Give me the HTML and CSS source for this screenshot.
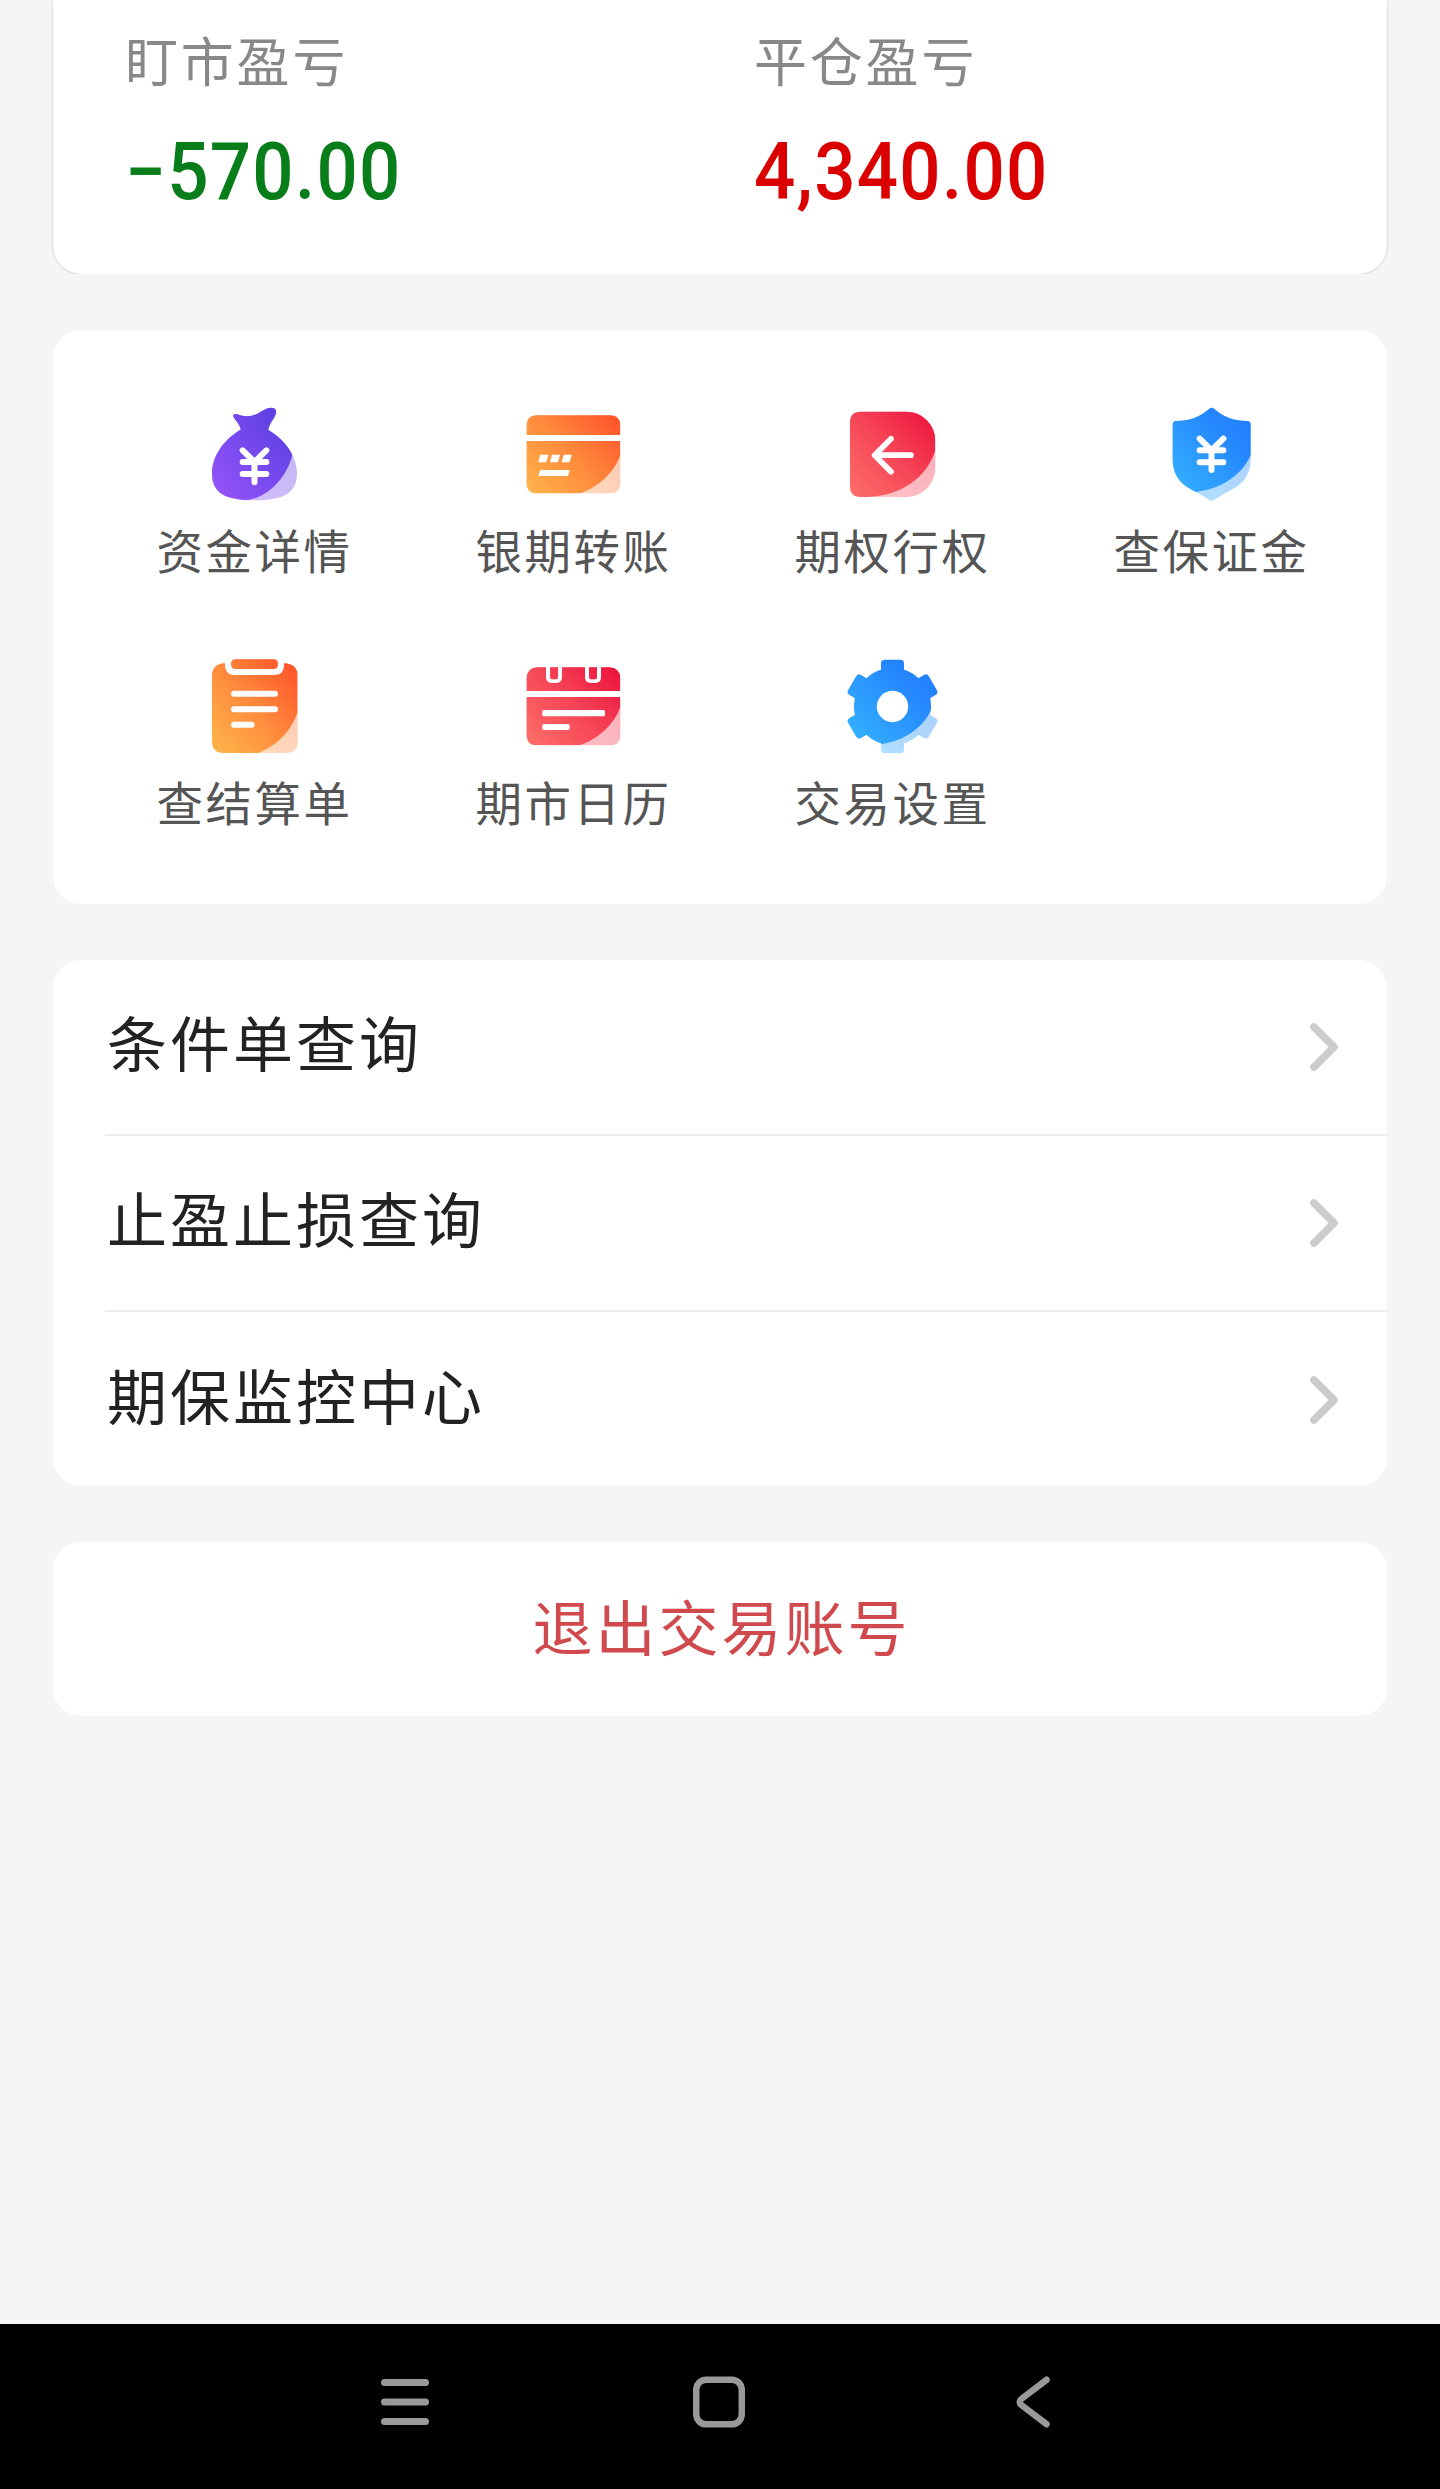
FILE: index.html
```html
<!DOCTYPE html>
<html lang="zh-CN">
<head>
<meta charset="utf-8">
<title>交易账户</title>
<link rel="stylesheet" href="styles.css">
</head>
<body>
<svg class="defs" width="0" height="0" aria-hidden="true">
  <defs>
    <linearGradient id="purple" x1="0" y1="1" x2="1" y2="0"><stop offset="0.1" stop-color="#9153f8"/><stop offset="0.85" stop-color="#5d40e2"/></linearGradient>
    <linearGradient id="orange" gradientUnits="userSpaceOnUse" x1="205" y1="320" x2="475" y2="75"><stop offset="0" stop-color="#ffb64c"/><stop offset="0.5" stop-color="#ff8a3c"/><stop offset="1" stop-color="#ff5129"/></linearGradient>
    <linearGradient id="red" gradientUnits="userSpaceOnUse" x1="205" y1="320" x2="465" y2="70"><stop offset="0" stop-color="#fd7069"/><stop offset="0.5" stop-color="#f64657"/><stop offset="1" stop-color="#ed123c"/></linearGradient>
    <linearGradient id="blue" gradientUnits="userSpaceOnUse" x1="205" y1="320" x2="460" y2="70"><stop offset="0" stop-color="#36b6ff"/><stop offset="0.75" stop-color="#2485fe"/><stop offset="1" stop-color="#2080ff"/></linearGradient>
    <clipPath id="fold-bag"><path d="M150 0H457V195C440 265 380 327 310 332H150Z"/></clipPath>
    <clipPath id="fold-card"><path d="M150 0H481V195C464 245 416 292 358 311H150Z"/></clipPath>
    <clipPath id="fold-tile"><path d="M150 0H466V180C440 265 360 318 262 321H150Z"/></clipPath>
    <clipPath id="fold-shield"><path d="M150 0H453V193C430 250 370 295 290 306H150Z"/></clipPath>
    <clipPath id="fold-sheet"><path d="M150 0H473V215C455 270 412 319 350 340H150Z"/></clipPath>
    <clipPath id="fold-calendar"><path d="M150 0H481V200C464 250 416 297 358 316H150Z"/></clipPath>
    <clipPath id="fold-gear"><path d="M150 0H490V175L455 205C435 260 370 306 302 312H150Z"/></clipPath>
    <path id="bag" d="M279 77Q282 69 292 73Q324 85 352 71C368 61 378 54 393 53Q411 53 408 70C404 87 388 99 385 120C428 144 471 194 471 249C471 309 432 331 343 331C255 331 216 309 216 249C216 194 258 143 302 119C299 100 285 92 279 77Z"/>
    <path id="card" d="M231 76H449Q481 76 481 108V135H200V108Q200 76 231 76ZM200 153H481V278Q481 310 449 310H231Q200 310 200 278Z"/>
    <path id="tile" d="M242 65H379A87 87 0 0 1 466 152V234A87 87 0 0 1 379 321H242Q210 321 210 289V97Q210 65 242 65Z"/>
    <path id="shield" d="M328 56Q335 50 342 56C373 83 404 92 442 93Q452 94 452 103V206C452 258 427 281 395 299Q365 314 342 330Q335 335 328 330Q305 314 275 299C243 281 218 258 218 206V103Q218 94 228 93C266 92 297 83 328 56Z"/>
    <path id="sheet" d="M255 70V79Q257 105 283 105H404Q430 105 432 79V70Q473 72 473 108V304Q473 339 438 339H251Q216 339 216 304V108Q216 72 255 70ZM287 58H400Q414 58 414 72Q414 87 400 87H287Q273 87 273 72Q273 58 287 58Z"/>
    <path id="calendar" d="M231 82H258V112Q258 129 275 129H289Q306 129 306 112V82H375V112Q375 129 392 129H406Q423 129 423 112V82H449Q481 84 481 116V153H200V116Q200 84 231 82ZM270 82H294V110Q294 118 286 118H278Q270 118 270 110ZM387 82H411V110Q411 118 403 118H395Q387 118 387 110ZM200 171H481V284Q481 316 449 316H231Q200 316 200 284Z"/>
    <g id="gear-body">
      <circle cx="337.500" cy="199.500" r="116"/>
      <g id="tooth-pair"><rect x="303" y="59.500" width="69" height="70" rx="11"/><rect x="303" y="269.500" width="69" height="70" rx="11"/></g>
      <use href="#tooth-pair" transform="rotate(60 337.5 199.5)"/>
      <use href="#tooth-pair" transform="rotate(120 337.5 199.5)"/>
    </g>
    <mask id="gear-mask" maskUnits="userSpaceOnUse" x="180" y="40" width="320" height="320"><use href="#gear-body" fill="#fff"/></mask>
  </defs>
</svg>

<main class="page">
  <section class="card summary">
    <div class="stat"><span class="stat-label">盯市盈亏</span><span class="stat-value loss">−570.00</span></div>
    <div class="stat"><span class="stat-label">平仓盈亏</span><span class="stat-value gain">4,340.00</span></div>
  </section>

  <section class="card tools">
    <a class="tool">
      <svg class="tool-icon" viewBox="201 48 288 288"><use href="#bag" fill="url(#purple)" opacity="0.38"/><g clip-path="url(#fold-bag)"><use href="#bag" fill="url(#purple)"/></g><path class="mark yen" d="M308 181L343.500 216L379 181M308 216H379M308 252H379M343.500 216V277"/></svg>
      <span>资金详情</span>
    </a>
    <a class="tool">
      <svg class="tool-icon" viewBox="198 48 288 288"><use href="#card" fill="url(#orange)" opacity="0.36"/><g clip-path="url(#fold-card)"><use href="#card" fill="url(#orange)"/></g><path class="solid" d="M241 194H265L259 217H235ZM276 194H300L294 217H270ZM311 194H335L329 217H305ZM241 240H329L324 258H235Z"/></svg>
      <span>银期转账</span>
    </a>
    <a class="tool">
      <svg class="tool-icon" viewBox="195 48 288 288"><use href="#tile" fill="url(#red)" opacity="0.38"/><g clip-path="url(#fold-tile)"><use href="#tile" fill="url(#red)"/></g><path class="mark arrow" d="M333 146L284 195.500L333 245M288 195.500H393"/></svg>
      <span>期权行权</span>
    </a>
    <a class="tool">
      <svg class="tool-icon" viewBox="192 48 288 288"><use href="#shield" fill="url(#blue)" opacity="0.38"/><g clip-path="url(#fold-shield)"><use href="#shield" fill="url(#blue)"/></g><path class="mark yen" d="M299 146L334.500 181L370 146M299 181H370M299 217H370M334.500 181V240"/></svg>
      <span>查保证金</span>
    </a>
    <a class="tool">
      <svg class="tool-icon" viewBox="201 54 288 288"><use href="#sheet" fill="url(#orange)" opacity="0.36"/><g clip-path="url(#fold-sheet)"><use href="#sheet" fill="url(#orange)"/></g><path class="mark lines" d="M282 161.500H405M282 208H405M282 254.500H335"/></svg>
      <span>查结算单</span>
    </a>
    <a class="tool">
      <svg class="tool-icon" viewBox="198 54 288 288"><use href="#calendar" fill="url(#red)" opacity="0.38"/><g clip-path="url(#fold-calendar)"><use href="#calendar" fill="url(#red)"/></g><g class="solid"><rect x="247" y="210" width="188" height="19" rx="5"/><rect x="247" y="252" width="82" height="18" rx="5"/></g></svg>
      <span>期市日历</span>
    </a>
    <a class="tool">
      <svg class="tool-icon" viewBox="195 54 288 288"><g mask="url(#gear-mask)"><rect x="190" y="50" width="300" height="300" fill="url(#blue)" opacity="0.38"/><g clip-path="url(#fold-gear)"><rect x="190" y="50" width="300" height="300" fill="url(#blue)"/></g></g><circle class="solid" cx="337.500" cy="199.500" r="47"/></svg>
      <span>交易设置</span>
    </a>
  </section>

  <nav class="card list">
    <a class="row"><span>条件单查询</span><svg class="chevron" viewBox="0 0 28 48"><path d="M4 4L24 24L4 44"/></svg></a>
    <a class="row"><span>止盈止损查询</span><svg class="chevron" viewBox="0 0 28 48"><path d="M4 4L24 24L4 44"/></svg></a>
    <a class="row"><span>期保监控中心</span><svg class="chevron" viewBox="0 0 28 48"><path d="M4 4L24 24L4 44"/></svg></a>
  </nav>

  <a class="card logout">退出交易账号</a>
</main>

<footer class="system-bar">
  <svg class="system-icon" viewBox="0 0 52 52"><path class="thick" d="M6.500 6.500H47.500M6.500 26H47.500M6.500 45.500H47.500"/></svg>
  <svg class="system-icon" viewBox="0 0 52 52"><rect x="3.200" y="3.700" width="45.600" height="44.600" rx="10"/></svg>
  <svg class="system-icon" viewBox="0 0 52 52"><path d="M38.500 3.800L14 22.500Q9.500 26 14 29.500L38.500 48.200"/></svg>
</footer>
</body>
</html>
```
FILE: styles.css
```css
* {
  box-sizing: border-box;
}

body {
  margin: 0;
  min-height: 2489px;
  display: flex;
  flex-direction: column;
  background: #f5f5f5;
  font-family: "Noto Sans CJK SC", sans-serif;
}

.defs {
  position: absolute;
}

.page {
  flex: 1;
  display: flex;
  flex-direction: column;
  gap: 56px;
  padding: 0 53px;
}

.card {
  background: #fff;
  border-radius: 28px;
}

.summary {
  display: flex;
  height: 274px;
  padding: 29px 0 0 72px;
  border-radius: 0 0 28px 28px;
  box-shadow: 0 0 2px rgba(0, 0, 0, 0.3);
  clip-path: inset(0 -4px);
}

.stat {
  width: 629px;
  display: flex;
  flex-direction: column;
}

.stat-label {
  font-size: 53px;
  line-height: 60px;
  letter-spacing: 2.8px;
  color: #888;
}

/* Condensed figures */
.stat-value {
  margin-top: 36px;
  font-family: Roboto, sans-serif;
  font-size: 79px;
  font-weight: 500;
  line-height: 94px;
  letter-spacing: 1.4px;
  transform: scaleX(0.92);
  transform-origin: left;
}

.loss {
  color: #087d19;
}

.gain {
  color: #db0000;
}

.tools {
  display: grid;
  grid-template-columns: repeat(4, 319px);
  align-content: start;
  row-gap: 80px;
  height: 574px;
  padding: 76px 0 0 42px;
}

.tool {
  display: flex;
  flex-direction: column;
  align-items: center;
  gap: 17px;
  font-size: 46.5px;
  line-height: 59px;
  letter-spacing: 2.5px;
  color: #555;
}

.tool-icon {
  width: 96px;
  height: 96px;
}

.mark {
  fill: none;
  stroke: #fff;
  stroke-linecap: round;
  stroke-linejoin: round;
  stroke-width: 18px;
}

.arrow {
  stroke-width: 17px;
}

.solid {
  fill: #fff;
}

.list {
  height: 526px;
  padding-left: 52px;
}

.row {
  display: flex;
  align-items: center;
  justify-content: space-between;
  height: 176px;
  padding: 0 49px 1px 2px;
  border-bottom: 2px solid #eee;
  font-size: 60px;
  line-height: 90px;
  letter-spacing: 3px;
  color: #222;
}

.row span {
  padding-bottom: 11px;
}

.row:last-child {
  border-bottom: 0;
}

.chevron {
  width: 28px;
  height: 48px;
  fill: none;
  stroke: #ccc;
  stroke-width: 7.5px;
  stroke-linecap: round;
  stroke-linejoin: round;
}

.logout {
  display: flex;
  align-items: center;
  justify-content: center;
  height: 174px;
  padding: 0 0 10px 3px;
  font-size: 60px;
  letter-spacing: 3px;
  color: #d04a4d;
}

.system-bar {
  display: flex;
  justify-content: space-between;
  height: 165px;
  padding: 52px 380px 0 378px;
  background: #000;
}

.system-icon {
  width: 52px;
  height: 52px;
  fill: none;
  stroke: #999;
  stroke-width: 6.5px;
  stroke-linecap: round;
  stroke-linejoin: round;
}

.thick {
  stroke-width: 7px;
}
```
